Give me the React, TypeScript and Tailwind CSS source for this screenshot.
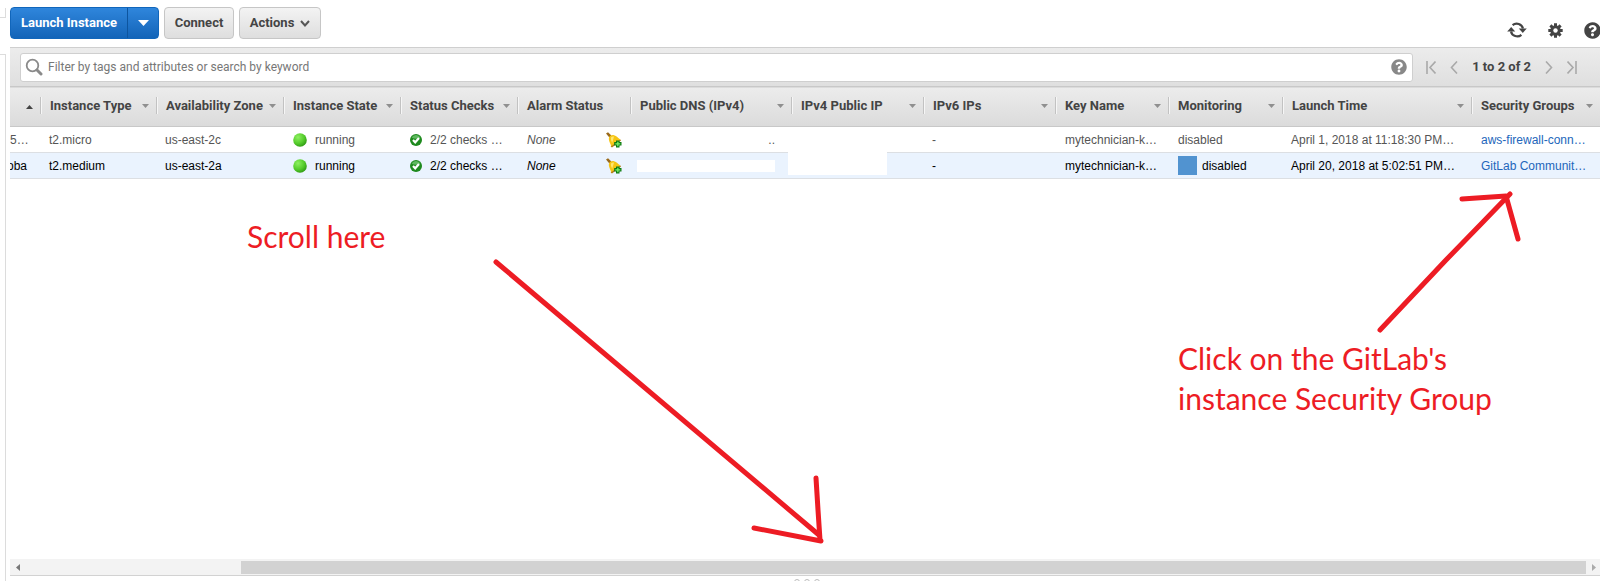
import React, { useState } from "react";
import { FaQuestionCircle } from "react-icons/fa";

interface IInstance {
  id: string;
  name: string;
  type: string;
  zone: string;
  state: string;
  checks: string;
  alarm: string;
  keyName: string;
  monitoring: string;
  launchTime: string;
  group: string;
}

const instances: IInstance[] = [
  {
    id: "micro",
    name: "5…",
    type: "t2.micro",
    zone: "us-east-2c",
    state: "running",
    checks: "2/2 checks …",
    alarm: "None",
    keyName: "mytechnician-k…",
    monitoring: "disabled",
    launchTime: "April 1, 2018 at 11:18:30 PM…",
    group: "aws-firewall-conn…",
  },
  {
    id: "medium",
    name: "oba",
    type: "t2.medium",
    zone: "us-east-2a",
    state: "running",
    checks: "2/2 checks …",
    alarm: "None",
    keyName: "mytechnician-k…",
    monitoring: "disabled",
    launchTime: "April 20, 2018 at 5:02:51 PM…",
    group: "GitLab Communit…",
  },
];

const columns = [
  { title: "Instance Type", width: "w-[116px]", sortable: true },
  { title: "Availability Zone", width: "w-[127px]", sortable: true },
  { title: "Instance State", width: "w-[117px]", sortable: true },
  { title: "Status Checks", width: "w-[117px]", sortable: true },
  { title: "Alarm Status", width: "w-[113px]", sortable: false },
  { title: "Public DNS (IPv4)", width: "w-[161px]", sortable: true },
  { title: "IPv4 Public IP", width: "w-[132px]", sortable: true },
  { title: "IPv6 IPs", width: "w-[132px]", sortable: true },
  { title: "Key Name", width: "w-[113px]", sortable: true },
  { title: "Monitoring", width: "w-[114px]", sortable: true },
  { title: "Launch Time", width: "w-[189px]", sortable: true },
  { title: "Security Groups", width: "w-auto", sortable: true },
];

const Caret = () => (
  <svg width="7" height="4" viewBox="0 0 7 4" className="shrink-0">
    <path d="M0 0h7L3.5 4z" fill="#8f8f8f" />
  </svg>
);

const SearchIcon = () => (
  <svg width="18" height="18" viewBox="0 0 18 18" className="shrink-0">
    <circle cx="7.5" cy="7.5" r="5.8" fill="none" stroke="#8a8a8a" strokeWidth="1.8" />
    <path d="M12 12l4 4" stroke="#8a8a8a" strokeWidth="3" strokeLinecap="round" />
  </svg>
);

const RefreshIcon = () => (
  <svg width="20" height="18" viewBox="0 0 20 18">
    <path d="M5.6 4.2A6.4 6.4 0 0 1 16 7.6" fill="none" stroke="#444" strokeWidth="2.2" />
    <path d="M14.4 13.8A6.4 6.4 0 0 1 4 10.4" fill="none" stroke="#444" strokeWidth="2.2" />
    <path d="M11.8 7.4h8L15.8 12z" fill="#444" />
    <path d="M.2 10.6h8L4.2 6z" fill="#444" />
  </svg>
);

const GearIcon = () => (
  <svg width="15" height="15" viewBox="0 0 15 15">
    <g stroke="#444" strokeWidth="3">
      <path d="M7.5 .3v14.4M.3 7.5h14.4M2.4 2.4l10.200 10.200M12.6 2.4L2.4 12.600" />
    </g>
    <circle cx="7.5" cy="7.5" r="5.2" fill="#444" />
    <circle cx="7.5" cy="7.5" r="2.2" fill="#fff" />
  </svg>
);

const StateIcon = () => (
  <svg width="14" height="14" viewBox="0 0 14 14" className="shrink-0">
    <defs>
      <radialGradient id="ball" cx="0.35" cy="0.3" r="0.75">
        <stop offset="0" stopColor="#8df060" />
        <stop offset="0.6" stopColor="#55cc2c" />
        <stop offset="1" stopColor="#2f9a14" />
      </radialGradient>
    </defs>
    <circle cx="7" cy="7" r="6.8" fill="url(#ball)" />
  </svg>
);

const CheckIcon = () => (
  <svg width="12" height="12" viewBox="0 0 12 12" className="shrink-0">
    <circle cx="6" cy="6" r="6" fill="#1e8a1e" />
    <path d="M1.6 3.6a5 5 0 0 1 8.8 0 9 9 0 0 1-8.8 0z" fill="#5fb95f" />
    <path d="M3 6l2.2 2.3L9 4" fill="none" stroke="#fff" strokeWidth="2.2" />
  </svg>
);

const BellIcon = () => (
  <svg width="16" height="16" viewBox="0 0 16 16" className="block">
    <path d="M0 1.4L2 .2l3.4 3.4-2 2z" fill="#9a6a1c" />
    <path d="M3 5.4C4 3.6 6 2.8 8 3.2c3 .6 3.6 2.6 6.4 4.4L5.2 14.4C4.6 11 2.2 8.6 3 5.4z" fill="#f6c514" />
    <path d="M5 5.6C6 4.4 7 4.2 8 4.6L6.2 11C5.6 9 4.4 7.6 5 5.6z" fill="#ffe771" />
    <path d="M4.6 14.6l9.8-7.2.6 1.2-9 6.8z" fill="#b07c12" />
    <path d="M10 8.5h3.5V10h2v3.5h-2v2H10v-2H8.200V10H10z" fill="#0c7a10" />
    <path d="M11.2 9.700h1.300v1.600h1.800v1.200h-1.800v1.800h-1.300v-1.800H9.400v-1.200h1.800z" fill="#7af06a" />
  </svg>
);

const PageButton = ({ label, path, width }: { label: string; path: string; width: number }) => (
  <button aria-label={label} className="shrink-0">
    <svg width={width} height="13" viewBox={`0 0 ${width} 13`}>
      <path d={path} fill="none" stroke="#a9a9a9" strokeWidth="1.6" />
    </svg>
  </button>
);

const Toolbar = () => (
  <div className="flex h-[47px] shrink-0 items-start justify-between pt-[7px] font-[Roboto,sans-serif] text-[13px] font-bold">
    <div className="flex h-8 gap-[5px] text-[#444]">
      <div className="flex w-[149px] overflow-hidden rounded-[4px] border border-[#1166bb] bg-linear-to-b from-[#2f86dc] to-[#1264b8] text-white">
        <button className="flex-1">Launch Instance</button>
        <button aria-label="More launch options" className="flex w-[31px] items-center justify-center border-l border-[#0d559f]">
          <svg width="11" height="6" viewBox="0 0 11 6">
            <path d="M0 0h11L5.5 6z" fill="#fff" />
          </svg>
        </button>
      </div>
      <button className="w-[70px] rounded-[4px] border border-[#c6c6c6] bg-linear-to-b from-[#f3f3f3] to-[#dedede]">
        Connect
      </button>
      <button className="flex w-[82px] items-center justify-center gap-[6px] rounded-[4px] border border-[#c6c6c6] bg-linear-to-b from-[#f3f3f3] to-[#dedede]">
        Actions
        <svg width="10" height="7" viewBox="0 0 10 7">
          <path d="M1 1l4 4.500L9 1" fill="none" stroke="#555" strokeWidth="2" />
        </svg>
      </button>
    </div>
    <div className="-mr-[1px] flex items-center gap-[21px] pt-[14px] text-[#444]">
      <button aria-label="Refresh">
        <RefreshIcon />
      </button>
      <button aria-label="Settings">
        <GearIcon />
      </button>
      <button aria-label="Help">
        <FaQuestionCircle size={17} />
      </button>
    </div>
  </div>
);

const FilterBar = () => {
  const [searchInput, setSearchInput] = useState("");
  return (
    <div className="flex h-[39px] shrink-0 items-center border-t border-[#cfcfcf] bg-linear-to-b from-[#ececec] to-[#dfdfdf] pr-[23px] pl-[10px] font-[Roboto,sans-serif]">
      <div className="flex h-[29px] flex-1 items-center gap-[5px] rounded-[3px] border border-[#cfcfcf] bg-white pr-[5px] pl-1">
        <SearchIcon />
        <input
          type="text"
          aria-label="Filter instances"
          placeholder="Filter by tags and attributes or search by keyword"
          value={searchInput}
          onChange={(e) => setSearchInput(e.target.value)}
          className="flex-1 text-[12px] text-[#444] outline-none placeholder:text-[#777]"
        />
        <button aria-label="Filter help" className="text-[#888]">
          <FaQuestionCircle size={16} />
        </button>
      </div>
      <div className="flex items-center gap-[14px] pl-[13px]">
        <PageButton label="First page" width={10} path="M1 0v13M9.5 .5l-5.500 6 5.500 6" />
        <PageButton label="Previous page" width={8} path="M7 .5l-5.500 6 5.500 6" />
        <span className="text-[13px] font-bold text-[#444]">1 to 2 of 2</span>
        <PageButton label="Next page" width={8} path="M1 .5l5.500 6-5.500 6" />
        <PageButton label="Last page" width={10} path="M.5 .5l5.500 6-5.500 6M9 0v13" />
      </div>
    </div>
  );
};

const InstanceTable = () => {
  const [selected, setSelected] = useState("medium");
  return (
    <table className="w-full table-fixed border-collapse text-left font-['Liberation_Sans',Arial,sans-serif] text-[12px] whitespace-nowrap">
      <thead className="font-[Roboto,sans-serif] text-[13px] text-[#444]">
        <tr className="h-10 border-y border-[#c8c8c8] bg-linear-to-b from-[#ececec] to-[#dbdbdb]">
          <th className="w-[30px] p-0">
            <button aria-label="Sort by name" className="flex w-full justify-end pr-[7px]">
              <svg width="7" height="4" viewBox="0 0 7 4">
                <path d="M0 4h7L3.5 0z" fill="#444" />
              </svg>
            </button>
          </th>
          {columns.map((column) => (
            <th key={column.title} className={`${column.width} p-0 pb-[2px] font-bold`}>
              <div className="flex h-[17px] items-center justify-between border-l border-[#c2c2c2] pr-[7px] pl-[9px] shadow-[inset_1px_0_0_#f6f6f6]">
                {column.title}
                {column.sortable && (
                  <button aria-label={`Sort by ${column.title}`}>
                    <Caret />
                  </button>
                )}
              </div>
            </th>
          ))}
        </tr>
      </thead>
      <tbody>
        {instances.map((item) => {
          const active = item.id === selected;
          return (
            <tr
              key={item.id}
              onClick={() => setSelected(item.id)}
              className={`h-[26px] border-b border-[#dcdfe3] ${active ? "bg-[#eaf3fe] text-black" : "text-[#555]"}`}
            >
              <td className="p-0">
                <div className={`flex overflow-hidden pr-[13px] ${active ? "justify-end" : ""}`}>{item.name}</div>
              </td>
              <td className="py-0 pr-0 pl-[9px]">{item.type}</td>
              <td className="py-0 pr-0 pl-[9px]">{item.zone}</td>
              <td className="py-0 pr-0 pl-[10px]">
                <div className="flex items-center gap-2">
                  <StateIcon />
                  {item.state}
                </div>
              </td>
              <td className="py-0 pr-0 pl-[10px]">
                <div className="flex items-center gap-2">
                  <CheckIcon />
                  {item.checks}
                </div>
              </td>
              <td className="py-0 pr-2 pl-[10px]">
                <div className="flex items-center justify-between italic">
                  {item.alarm}
                  <button aria-label="Create alarm">
                    <BellIcon />
                  </button>
                </div>
              </td>
              <td className="py-0 pr-4 pl-[7px]">
                {active ? <div className="h-3 bg-white" /> : <div className="text-right">..</div>}
              </td>
              <td className="relative p-0">
                {active && <div className="absolute -top-[2px] -left-[3px] h-6 w-[99px] bg-white" />}
              </td>
              <td className="py-0 pr-0 pl-[9px]">-</td>
              <td className="py-0 pr-0 pl-[10px]">{item.keyName}</td>
              <td className="py-0 pr-0 pl-[10px]">
                <div className="flex items-center gap-[5px]">
                  {active && <span className="size-[19px] bg-[#5193d0]" />}
                  {item.monitoring}
                </div>
              </td>
              <td className="py-0 pr-0 pl-[9px]">{item.launchTime}</td>
              <td className="py-0 pr-0 pl-[10px]">
                <a href="#" className="text-[#2266bb]">
                  {item.group}
                </a>
              </td>
            </tr>
          );
        })}
      </tbody>
    </table>
  );
};

const ScrollBar = () => (
  <div className="flex h-[17px] shrink-0 items-center justify-between border-b border-[#d2d2d2] bg-[#f3f3f3]">
    <button aria-label="Scroll left" className="flex w-[14.5%] pl-[6px]">
      <svg width="4" height="7" viewBox="0 0 4 7">
        <path d="M4 0v7L0 3.5z" fill="#777" />
      </svg>
    </button>
    <div className="h-[13px] flex-1 bg-[#d2d2d2]" />
    <button aria-label="Scroll right" className="flex w-[14px] justify-end pr-1">
      <svg width="4" height="7" viewBox="0 0 4 7">
        <path d="M0 0v7l4-3.5z" fill="#aaa" />
      </svg>
    </button>
  </div>
);

// hand drawn notes that lie over the console
const Notes = () => (
  <div className="pointer-events-none absolute inset-0 font-[Lato,Calibri,sans-serif] text-[30px] leading-10 whitespace-nowrap text-[#ed1c24]">
    <svg width="1600" height="581" viewBox="0 0 1600 581" className="absolute top-0 left-0">
      <g fill="none" stroke="#ed1c24" strokeWidth="5" strokeLinecap="round" strokeLinejoin="round">
        <path d="M496 262L819 535" />
        <path d="M816 478L818 510 820 540" />
        <path d="M754 528L821 541" />
        <path d="M1380 330L1446 260 1482 223 1510 194" />
        <path d="M1462 199L1506 196 1518 239" />
      </g>
    </svg>
    <p className="absolute top-[216px] left-[247px]">Scroll here</p>
    <p className="absolute top-[338px] left-[1178px]">
      Click on the GitLab's
      <br />
      instance Security Group
    </p>
  </div>
);

export default function App() {
  return (
    <div className="relative flex h-screen overflow-hidden bg-white">
      <aside className="flex w-[6px] shrink-0 flex-col pt-2">
        <div className="h-[10px] border-r border-b border-[#dcdcdc]" />
        <div className="mt-9 flex-1 border-t border-r border-[#dcdcdc]" />
      </aside>
      <main className="flex min-w-0 flex-1 flex-col pl-1">
        <Toolbar />
        <FilterBar />
        <div className="flex-1">
          <InstanceTable />
        </div>
        <ScrollBar />
        <div className="flex h-[5px] shrink-0 justify-center gap-1 overflow-hidden pt-[3px] pl-1">
          <span className="size-[6px] rounded-full border border-[#bbb]" />
          <span className="size-[6px] rounded-full border border-[#bbb]" />
          <span className="size-[6px] rounded-full border border-[#bbb]" />
        </div>
      </main>
      <Notes />
    </div>
  );
}
